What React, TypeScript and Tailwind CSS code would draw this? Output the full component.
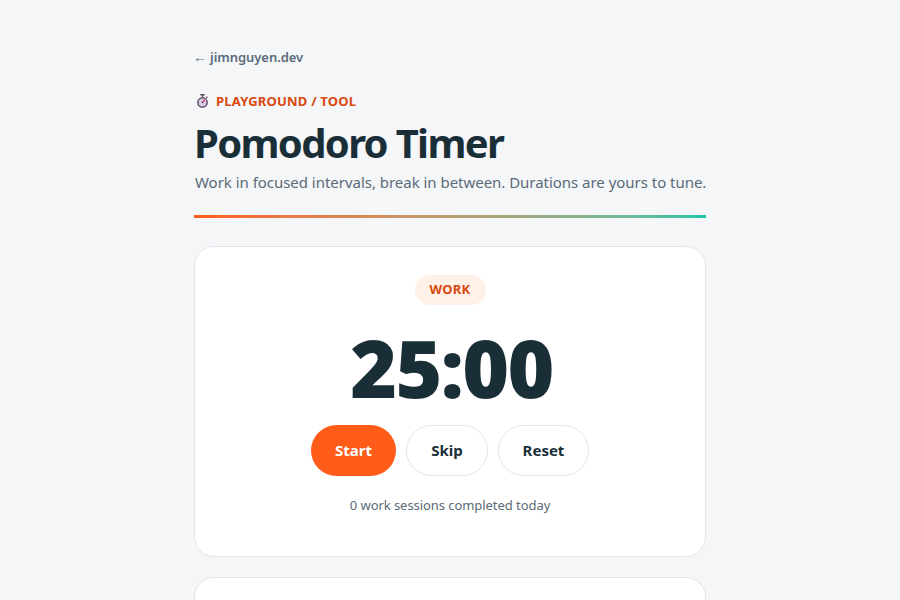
export default function App() {
  return (
    <div className="min-h-[600px] h-[600px] overflow-hidden bg-[#f4f6f8] font-['Noto_Sans',sans-serif] text-[#1a2e38]">
      <div className="mx-auto w-[512px] pt-[48px]">
        <a className="flex items-center gap-[3px] text-[13px] leading-[18px] font-semibold text-[#5a6b78]">
          <span className="text-[14px] leading-[18px] font-normal -ml-px">←</span>
          <span className="tracking-[-0.05px]">jimnguyen.dev</span>
        </a>
        <div className="mt-[26px] flex h-[18px] items-center gap-[6px] text-[13px] font-bold leading-[18px] tracking-[0.2px] text-[#d9480f]">
          <svg width="15" height="16" viewBox="0 0 15 16" className="ml-px">
            <rect x="5.5" y="1" width="4" height="1.6" fill="#4a3f52" />
            <rect x="6.8" y="2.4" width="1.4" height="1.6" fill="#6b5a70" />
            <rect x="11" y="3.5" width="1.6" height="1.6" fill="#6b5a70" transform="rotate(45 11.8 4.3)" />
            <circle cx="7.5" cy="9.5" r="5.4" fill="#5f4d68" />
            <circle cx="7.5" cy="9.5" r="3.9" fill="#d9c9e4" />
            <path d="M7.5 9.5 L9.6 7" stroke="#d0345a" strokeWidth="1.2" />
            <circle cx="7.5" cy="9.5" r="0.8" fill="#5f4d68" />
          </svg>
          <span>PLAYGROUND / TOOL</span>
        </div>
        <h1 className="mt-[9px] text-[40px] font-bold leading-[48px] tracking-[-1.66px] text-[#1a2e38] whitespace-nowrap">Pomodoro Timer</h1>
        <p className="mt-[5px] text-[15px] leading-[20px] tracking-[-0.03px] text-[#5a6b78] whitespace-nowrap pl-px">Work in focused intervals, break in between. Durations are yours to tune.</p>
        <div className="mt-[23px] h-[3px] bg-gradient-to-r from-[#ff5c1a] to-[#14c4a8]" />
        <div className="mt-[28px] flex h-[311px] flex-col items-center rounded-[20px] border border-[#e2e6ea] bg-white pt-[28px]">
          <span className="flex h-[30px] w-[71px] items-center justify-center rounded-full bg-[#fff0e8] text-[13px] font-bold tracking-[0.3px] text-[#d9480f]">WORK</span>
          <div className="mt-[16px] ml-[3px] text-[80px] font-black leading-[92px] tracking-[-1.6px] text-[#1a2e38]">25:00</div>
          <div className="mt-[12px] flex gap-[10px]">
            <button className="h-[51px] w-[85px] rounded-full bg-[#ff5c1a] text-[15px] font-bold text-white">Start</button>
            <button className="h-[51px] w-[82px] rounded-full border border-[#e2e6ea] bg-white text-[15px] font-bold text-[#1a2e38]">Skip</button>
            <button className="h-[51px] w-[91px] rounded-full border border-[#e2e6ea] bg-white text-[15px] font-bold text-[#1a2e38]">Reset</button>
          </div>
          <p className="mt-[19px] text-[13px] leading-[20px] tracking-[-0.06px] text-[#5a6b78]">0 work sessions completed today</p>
        </div>
        <div className="mt-[20px] h-[200px] rounded-[20px] border border-[#e2e6ea] bg-white" />
      </div>
    </div>
  );
}
